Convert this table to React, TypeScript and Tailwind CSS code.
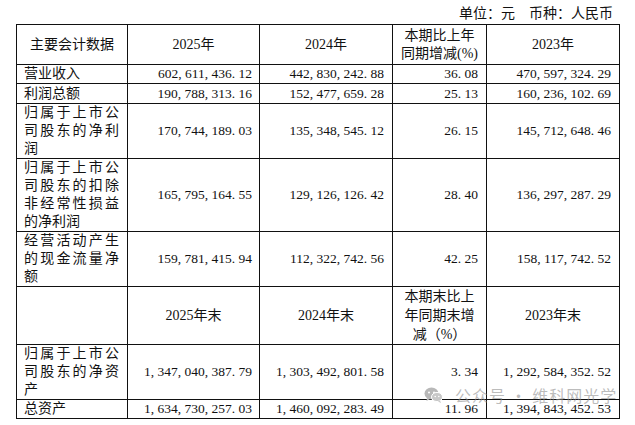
import React from 'react';

const font = "font-['Liberation_Serif','Noto_Sans_CJK_SC',serif]";

type Row = {
  label: string;
  values: string[];
  h: string;
};

const topRows: Row[] = [
  { label: '营业收入', values: ['602, 611, 436. 12', '442, 830, 242. 88', '36. 08', '470, 597, 324. 29'], h: 'h-[19px]' },
  { label: '利润总额', values: ['190, 788, 313. 16', '152, 477, 659. 28', '25. 13', '160, 236, 102. 69'], h: 'h-[20px]' },
  { label: '归属于上市公司股东的净利润', values: ['170, 744, 189. 03', '135, 348, 545. 12', '26. 15', '145, 712, 648. 46'], h: 'h-[55px]' },
  {
    label: '归属于上市公司股东的扣除非经常性损益的净利润',
    values: ['165, 795, 164. 55', '129, 126, 126. 42', '28. 40', '136, 297, 287. 29'],
    h: 'h-[73px]',
  },
  { label: '经营活动产生的现金流量净额', values: ['159, 781, 415. 94', '112, 322, 742. 56', '42. 25', '158, 117, 742. 52'], h: 'h-[55px]' },
];

const bottomRows: Row[] = [
  {
    label: '归属于上市公司股东的净资产',
    values: ['1, 347, 040, 387. 79', '1, 303, 492, 801. 58', '3. 34', '1, 292, 584, 352. 52'],
    h: 'h-[55px]',
  },
  { label: '总资产', values: ['1, 634, 730, 257. 03', '1, 460, 092, 283. 49', '11. 96', '1, 394, 843, 452. 53'], h: 'h-[19px]' },
];

const cell = 'border border-[#111] p-0 align-middle';

const DataRow: React.FC<{ row: Row }> = ({ row }) => (
  <tr className={row.h}>
    <td className={`${cell} pl-[7px] pr-[8px] text-justify text-[14px]`}>{row.label}</td>
    {row.values.map((v, i) => (
      <td key={i} className={`${cell} text-right text-[13.5px] ${i === 0 ? 'pr-[7px]' : 'pr-[8px]'}`}>
        {v}
      </td>
    ))}
  </tr>
);

const WeChatIcon: React.FC = () => (
  <svg width="19" height="16" viewBox="0 0 19 16" className="shrink-0">
    <ellipse cx="7.5" cy="6.5" rx="7" ry="6" fill="#b8b8b8" />
    <path d="M3 11 L2.5 14 L6 12 Z" fill="#b8b8b8" />
    <circle cx="5" cy="5.5" r="1" fill="#fff" />
    <circle cx="10" cy="5.5" r="1" fill="#fff" />
    <ellipse cx="13" cy="10" rx="5.5" ry="4.6" fill="#c8c8c8" stroke="#fff" strokeWidth="1" />
    <path d="M16 13.5 L17 16 L14 14.4 Z" fill="#c8c8c8" />
    <circle cx="11.2" cy="9.5" r="0.8" fill="#fff" />
    <circle cx="14.8" cy="9.5" r="0.8" fill="#fff" />
  </svg>
);

export default function App() {
  return (
    <div className={`relative h-[425px] w-[635px] overflow-hidden bg-white text-[#111] ${font}`}>
      <div className="flex h-[24px] items-center justify-end gap-[14px] pr-[22px] pt-[4px] text-[14px] leading-[18px]">
        <span>单位：元</span>
        <span>币种：人民币</span>
      </div>
      <table className="ml-[16px] w-[603px] table-fixed border-collapse leading-[18px]">
        <colgroup>
          <col className="w-[111px]" />
          <col className="w-[132px]" />
          <col className="w-[133px]" />
          <col className="w-[94px]" />
          <col className="w-[133px]" />
        </colgroup>
        <tbody>
          <tr className="h-[40px] text-center text-[14px]">
            <td className={cell}>主要会计数据</td>
            <td className={cell}>2025年</td>
            <td className={cell}>2024年</td>
            <td className={`${cell} px-[6px]`}>本期比上年同期增减(%)</td>
            <td className={cell}>2023年</td>
          </tr>
          {topRows.map((r) => (
            <DataRow key={r.label} row={r} />
          ))}
          <tr className="h-[56px] text-center text-[14px]">
            <td className={cell}></td>
            <td className={cell}>2025年末</td>
            <td className={cell}>2024年末</td>
            <td className={`${cell} px-[6px] leading-[19px]`}>本期末比上年同期末增减（%）</td>
            <td className={cell}>2023年末</td>
          </tr>
          {bottomRows.map((r) => (
            <DataRow key={r.label} row={r} />
          ))}
        </tbody>
      </table>
      <div className="pointer-events-none absolute left-[424px] top-[386px] flex items-center gap-[12px] text-[16px] leading-[18px] text-[#8f8f8f]/60 font-['Noto_Sans_CJK_SC',sans-serif]">
        <WeChatIcon />
        <span className="tracking-[1px]">公众号 · 维科网光学</span>
      </div>
    </div>
  );
}
